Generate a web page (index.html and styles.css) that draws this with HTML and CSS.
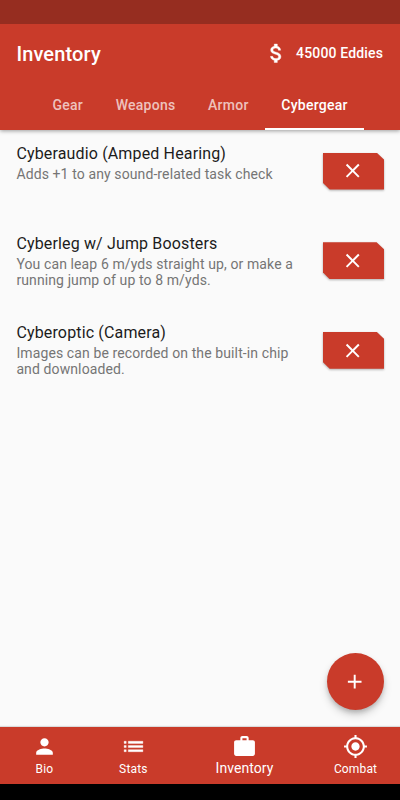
FILE: index.html
```html
<!DOCTYPE html>
<html lang="en">
<head>
<meta charset="utf-8">
<title>Inventory</title>
<link rel="stylesheet" href="styles.css">
</head>
<body>
<div class="screen">
  <header class="app-bar">
    <div class="status-bar"></div>
    <div class="toolbar">
      <h1 class="title">Inventory</h1>
      <svg class="icon icon-money" viewBox="0 0 24 24"><path d="M11.8 10.9c-2.27-.59-3-1.2-3-2.15 0-1.09 1.01-1.85 2.7-1.85 1.78 0 2.44.85 2.5 2.1h2.21c-.07-1.72-1.12-3.3-3.21-3.81V3h-3v2.16c-1.94.42-3.5 1.68-3.5 3.61 0 2.31 1.91 3.46 4.7 4.13 2.5.6 3 1.48 3 2.41 0 .69-.49 1.79-2.7 1.79-2.06 0-2.87-.92-2.98-2.1h-2.2c.12 2.19 1.76 3.42 3.68 3.83V21h3v-2.15c1.95-.37 3.5-1.5 3.5-3.55 0-2.84-2.43-3.81-4.7-4.4z"/></svg>
      <span class="money">45000 Eddies</span>
    </div>
    <nav class="tabs">
      <span class="tab">Gear</span>
      <span class="tab">Weapons</span>
      <span class="tab">Armor</span>
      <span class="tab tab-active">Cybergear</span>
    </nav>
  </header>
  <main class="content">
    <article class="item">
      <div class="item-text">
        <h2 class="item-title">Cyberaudio (Amped Hearing)</h2>
        <p class="item-desc">Adds +1 to any sound-related task check</p>
      </div>
      <div class="remove"><div class="remove-shape"><svg class="icon" viewBox="0 0 24 24"><path d="M19 6.41L17.59 5 12 10.59 6.41 5 5 6.41 10.59 12 5 17.59 6.41 19 12 13.41 17.59 19 19 17.59 13.41 12z"/></svg></div></div>
    </article>
    <article class="item">
      <div class="item-text">
        <h2 class="item-title">Cyberleg w/ Jump Boosters</h2>
        <p class="item-desc">You can leap 6 m/yds straight up, or make a<br>running jump of up to 8 m/yds.</p>
      </div>
      <div class="remove"><div class="remove-shape"><svg class="icon" viewBox="0 0 24 24"><path d="M19 6.41L17.59 5 12 10.59 6.41 5 5 6.41 10.59 12 5 17.59 6.41 19 12 13.41 17.59 19 19 17.59 13.41 12z"/></svg></div></div>
    </article>
    <article class="item">
      <div class="item-text">
        <h2 class="item-title">Cyberoptic (Camera)</h2>
        <p class="item-desc">Images can be recorded on the built-in chip<br>and downloaded.</p>
      </div>
      <div class="remove"><div class="remove-shape"><svg class="icon" viewBox="0 0 24 24"><path d="M19 6.41L17.59 5 12 10.59 6.41 5 5 6.41 10.59 12 5 17.59 6.41 19 12 13.41 17.59 19 19 17.59 13.41 12z"/></svg></div></div>
    </article>
    <div class="fab"><svg class="icon" viewBox="0 0 24 24"><path d="M19 13h-6v6h-2v-6H5v-2h6V5h2v6h6v2z"/></svg></div>
  </main>
  <nav class="bottom-nav">
    <div class="nav-item">
      <svg class="icon icon-nav" viewBox="0 0 24 24"><path d="M12 12c2.21 0 4-1.79 4-4s-1.79-4-4-4-4 1.79-4 4 1.79 4 4 4zm0 2c-2.67 0-8 1.34-8 4v2h16v-2c0-2.66-5.33-4-8-4z"/></svg>
      <span class="nav-label">Bio</span>
    </div>
    <div class="nav-item">
      <svg class="icon icon-nav icon-list" viewBox="0 0 24 24"><path d="M3 13h2v-2H3v2zm0 4h2v-2H3v2zm0-8h2V7H3v2zm4 4h14v-2H7v2zm0 4h14v-2H7v2zM7 7v2h14V7H7z"/></svg>
      <span class="nav-label">Stats</span>
    </div>
    <div class="nav-item nav-active">
      <svg class="icon icon-nav" viewBox="0 0 24 24"><path fill-rule="evenodd" d="M20 6h-4V4c0-1.11-.89-2-2-2h-4c-1.11 0-2 .89-2 2v2H4c-1.11 0-2 .89-2 2v11c0 1.11.89 2 2 2h16c1.11 0 2-.89 2-2V8c0-1.11-.89-2-2-2zm-6 0h-4V4h4v2z"/></svg>
      <span class="nav-label">Inventory</span>
    </div>
    <div class="nav-item">
      <svg class="icon icon-nav" viewBox="0 0 24 24"><path d="M12 8c-2.21 0-4 1.79-4 4s1.79 4 4 4 4-1.79 4-4-1.79-4-4-4zm8.94 3c-.46-4.17-3.77-7.48-7.94-7.94V1h-2v2.06C6.83 3.52 3.52 6.83 3.06 11H1v2h2.06c.46 4.17 3.77 7.48 7.94 7.94V23h2v-2.06c4.17-.46 7.48-3.77 7.94-7.94H23v-2h-2.06zM12 19c-3.87 0-7-3.13-7-7s3.13-7 7-7 7 3.13 7 7-3.13 7-7 7z"/></svg>
      <span class="nav-label">Combat</span>
    </div>
  </nav>
  <div class="system-bar"></div>
</div>
</body>
</html>
```
FILE: styles.css
```css
* { box-sizing: border-box; }
body { margin: 0; font-family: Roboto, "Liberation Sans", sans-serif; }
h1, h2, p { margin: 0; }
.screen { width: 400px; height: 800px; display: flex; flex-direction: column; background: #fafafa; overflow: hidden; }
.icon { display: block; flex: none; width: 23.4px; height: 23.4px; fill: #fff; }
.icon-money { width: 24.6px; height: 24.6px; stroke: #fff; stroke-width: .4; }
.icon-nav { width: 25px; height: 25px; }
.icon-list { stroke: #fff; stroke-width: .35; }
.app-bar { flex: none; height: 130.4px; background: #c93b2a; color: #fff; box-shadow: 0 1px 4px rgba(0,0,0,.38); z-index: 1; }
.status-bar { height: 24px; background: #962d20; }
.toolbar { display: flex; align-items: center; height: 58px; padding: 0 17px 0 16.4px; }
.title { flex: 1; font-size: 20px; line-height: 24px; font-weight: 500; letter-spacing: .13px; padding-top: 2px; }
.money { margin-left: 8px; font-size: 14px; font-weight: 500; letter-spacing: .15px; }
.tabs { display: flex; justify-content: center; height: 48.4px; }
.tab { padding: 15px 16.2px 0 16.4px; font-size: 14px; line-height: 16px; font-weight: 500; letter-spacing: .26px; color: rgba(255,255,255,.7); border-bottom: 2px solid transparent; }
.tab-active { color: #fff; border-color: #fff; }
.content { flex: 1; position: relative; }
.item { display: flex; justify-content: space-between; height: 89.6px; padding: 13.6px 16px 0 16.4px; }
.item-title { font-size: 16px; line-height: 20px; font-weight: 400; letter-spacing: .15px; color: #1c1c1c; white-space: nowrap; }
.item-desc { margin-top: 2px; font-size: 14px; line-height: 16px; letter-spacing: .11px; color: #757575; white-space: nowrap; }
.remove { flex: none; width: 61.4px; height: 37px; margin-top: 8.6px; filter: drop-shadow(0 1px 1px rgba(0,0,0,.3)); }
.remove-shape { display: flex; align-items: center; justify-content: center; height: 100%; padding-right: 1px; background: #c93b2a; clip-path: polygon(0 0, 54px 0, 100% 7px, 100% 100%, 7px 100%, 0 30px); }
.fab { position: absolute; right: 16px; bottom: 17px; display: flex; align-items: center; justify-content: center; width: 57px; height: 57px; padding-right: 1px; border-radius: 50%; background: #c93b2a; box-shadow: 0 3px 5px -1px rgba(0,0,0,.2), 0 5px 9px rgba(0,0,0,.16); }
.bottom-nav { flex: none; display: flex; height: 57px; background: #c93b2a; color: #fff; box-shadow: 0 -1px 1px rgba(0,0,0,.12); z-index: 1; }
.nav-item { flex: 1 1 0; display: flex; flex-direction: column; align-items: center; padding-top: 7px; }
.nav-active { flex-grow: 1.5; padding-top: 7px; }
.nav-label { margin-top: 2px; font-size: 12px; line-height: 16px; letter-spacing: .15px; }
.nav-active .nav-label { margin-top: 1px; font-size: 14px; letter-spacing: .06px; }
.system-bar { flex: none; height: 16px; background: #000; }
```
